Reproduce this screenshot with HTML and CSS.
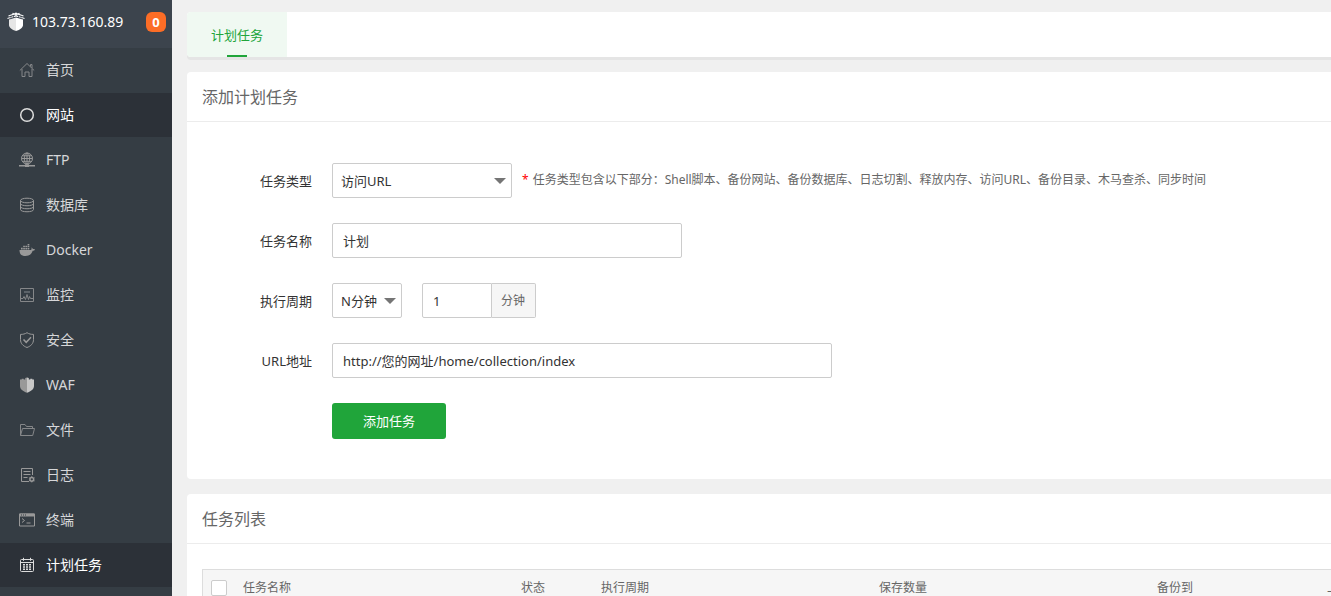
FILE: index.html
```html
<!DOCTYPE html>
<html lang="zh-CN">
<head>
<meta charset="utf-8">
<title>计划任务</title>
<link rel="stylesheet" href="styles.css">
</head>
<body>
<div class="app">
  <aside class="sidebar">
    <div class="server">
      <svg class="server-logo" viewBox="0 0 18 20" width="18" height="20">
        <path fill="#e6e6e6" d="M2 7l7-1.500v13.500c-4-1-7-3.500-7-6z"/>
        <path fill="#fff" d="M9 5.500L16 7v6c0 2.500-3 5-7 6z"/>
        <path fill="none" stroke="#fff" stroke-width="1.200" d="M9 .500v5M.5 6.500l8.500-2.500 8.500 2.500M1.500 4l7.500-2.500L16.500 4M5.500 1.200l2 1M12.500 1.200l-2 1"/>
        <path fill="none" stroke="#3c444d" stroke-width=".7" d="M1 7.500l8-2.500 8 2.500M4 3.800v3M6.500 3v3M11.500 3v3M14 3.800v3"/>
      </svg>
      <span class="server-ip">103.73.160.89</span>
      <span class="badge">0</span>
    </div>
    <nav class="menu">
      <a class="menu-item" href="#"><svg class="icon dim" viewBox="0 0 16 16"><path d="M.800 8.500L8 1.500l7.200 7M3 7v7.500h3V10h4v4.500h3V7M11.500 4.500v-2h1.500V6"/></svg>首页</a>
      <a class="menu-item active" href="#"><svg class="icon thick" viewBox="0 0 16 16"><circle cx="8" cy="8" r="6.300"/></svg>网站</a>
      <a class="menu-item" href="#"><svg class="icon" viewBox="0 0 16 16"><circle cx="8" cy="6.500" r="5.500"/><ellipse cx="8" cy="6.500" rx="2.700" ry="5.500"/><path d="M8 1v11M2.500 6.500h11M3.500 3.800h9M3.500 9.300h9"/><path class="solid" d="M0 13h16v1.500H0zM6 12.300h4v2.700H6z"/></svg>FTP</a>
      <a class="menu-item" href="#"><svg class="icon" viewBox="0 0 16 16"><ellipse cx="8" cy="3.500" rx="6.500" ry="2.300"/><path d="M1.500 3.500v9c0 3 13 3 13 0v-9M1.500 6.500c0 3 13 3 13 0M1.500 9.500c0 3 13 3 13 0"/></svg>数据库</a>
      <a class="menu-item" href="#"><svg class="icon fill" viewBox="0 0 16 16"><path d="M.500 8h11.500c.800-.700.700-1.700.400-2.500.900.300 1.400 1 1.500 1.700.700-.200 1.400-.100 2 .200-.400 1-1.300 1.300-2.200 1.300C12.700 12 10 14 6.500 14 2.800 14 .500 12.500.500 8zM2 5.700h1.700v1.700H2zM4.200 5.700h1.700v1.700H4.200zM6.400 5.700h1.700v1.700H6.400zM8.600 5.700h1.700v1.700H8.600zM4.200 3.700h1.700v1.400H4.200zM6.400 3.700h1.700v1.400H6.400zM8.600 3.700h1.700v1.400H8.600zM8.600 2h1.700v1.200H8.600z"/></svg>Docker</a>
      <a class="menu-item" href="#"><svg class="icon dim" viewBox="0 0 16 16"><path d="M1.500 1.500h13v13h-13zM1.500 11.500H4l1-2 1.500 3 1.500-5 1.500 5 1-3 1 2h3"/><path class="faint" d="M5 4.500h6M5 5.500h6"/></svg>监控</a>
      <a class="menu-item" href="#"><svg class="icon" viewBox="0 0 16 16"><path d="M8 .700c2 1.300 4 1.700 6.500 1.700v5.100c0 4-2.500 6.500-6.500 8-4-1.500-6.500-4-6.500-8V2.400C4 2.400 6 2 8 .700z"/><path class="thick" d="M4.500 7.500l2.700 2.800L12 5.200"/></svg>安全</a>
      <a class="menu-item" href="#"><svg class="icon fill" viewBox="0 0 16 16"><path d="M8 .500v15.300C4 14.500 1 12 1 9V2.500h1.700V1.800h2v.700h1.500V1z"/><path class="light" d="M8 .500v15.300c4-1.300 7-3.800 7-6.800V2.500h-1.700V1.800h-2v.700H9.800V1z"/></svg>WAF</a>
      <a class="menu-item" href="#"><svg class="icon dim" viewBox="0 0 16 16"><path d="M1.500 13.500v-11h4.500l1.500 2h6v2M1.500 13.500l2-7h12l-1.800 7z"/></svg>文件</a>
      <a class="menu-item" href="#"><svg class="icon" viewBox="0 0 16 16"><path d="M13.500 8V1.500h-11v13H10M4.500 4.500h7M4.500 7.500h7M4.500 10.500h4"/><circle class="thick" cx="12.800" cy="12.300" r="1.900"/><path d="M12.800 9.200v1M12.800 14.400v1M10.100 10.700l.8.500M14.700 13.400l.8.500M15.500 10.700l-.8.500M10.900 13.400l-.8.500"/></svg>日志</a>
      <a class="menu-item" href="#"><svg class="icon" viewBox="0 0 16 16"><path d="M.500 2h15v12H.500zM3 6.500l2.500 2L3 10.500M7.500 11h4"/><path class="solid" d="M.500 1.500h15v3H.500z"/><path class="cut" d="M2 3h1M4 3h1M6 3h1"/></svg>终端</a>
      <a class="menu-item active" href="#"><svg class="icon" viewBox="0 0 16 16"><rect x="1.500" y="2.500" width="13" height="12" rx="1"/><path d="M1.500 5.500h13M4.500 .800v3M11.500 .800v3"/><path class="solid" d="M4 7h2v1.500H4zM7 7h2v1.500H7zM10 7h2v1.500h-2zM4 9.300h2v1.400H4zM7 9.300h2v1.400H7zM10 9.300h2v1.400h-2zM4 11.500h2v1.400H4zM7 11.500h2v1.400H7zM10 11.500h2v1.400h-2z"/></svg>计划任务</a>
    </nav>
  </aside>

  <main class="main">
    <div class="tabs"><a class="tab" href="#">计划任务</a></div>

    <section class="card">
      <h2 class="card-title">添加计划任务</h2>
      <form class="form">
        <div class="row">
          <label class="label" for="type">任务类型</label>
          <span class="select type"><select id="type"><option>访问URL</option></select></span>
          <p class="note"><span class="star">*</span>任务类型包含以下部分：Shell脚本、备份网站、备份数据库、日志切割、释放内存、访问URL、备份目录、木马查杀、同步时间</p>
        </div>
        <div class="row">
          <label class="label" for="name">任务名称</label>
          <input class="input name" id="name" type="text" value="计划">
        </div>
        <div class="row">
          <label class="label" for="cycle">执行周期</label>
          <span class="select cycle"><select id="cycle"><option>N分钟</option></select></span>
          <span class="group">
            <input class="input count" type="text" value="1" aria-label="分钟">
            <span class="unit">分钟</span>
          </span>
        </div>
        <div class="row">
          <label class="label" for="url">URL地址</label>
          <input class="input url" id="url" type="text" value="http://您的网址/home/collection/index">
        </div>
        <div class="row">
          <span class="label"></span>
          <button class="submit" type="button">添加任务</button>
        </div>
      </form>
    </section>

    <section class="card">
      <h2 class="card-title">任务列表</h2>
      <div class="list">
        <table class="table">
          <colgroup><col class="c-check"><col class="c-wide"><col class="c-state"><col class="c-wide"><col class="c-wide"><col class="c-last"></colgroup>
          <thead>
            <tr><th><input class="check" type="checkbox" aria-label="全选"></th><th>任务名称</th><th>状态</th><th>执行周期</th><th>保存数量</th><th>备份到</th><th>上次执行时间</th></tr>
          </thead>
        </table>
      </div>
    </section>
  </main>
</div>
</body>
</html>
```
FILE: styles.css
```css
* { box-sizing: border-box; }

body {
  margin: 0;
  height: 100vh;
  overflow: hidden;
  background: #f0f0f0;
  color: #333;
  font: 13px/20px "Noto Sans", "Noto Sans CJK SC", sans-serif;
}

a { text-decoration: none; color: inherit; }

.app { display: flex; height: 100%; }

/* Sidebar */
.sidebar { flex: none; width: 172px; background: #353d44; color: #d6d7d9; }

.server {
  display: flex;
  align-items: center;
  height: 48px;
  padding: 0 6px 4px 7px;
  background: #3c444d;
  color: #fff;
  font-size: 14px;
}
.server-logo { margin-right: 7px; }
.server-ip { flex: 1; }
.badge {
  width: 20px;
  border-radius: 6px;
  background: #fc6d26;
  font-size: 13px;
  font-weight: 700;
  text-align: center;
}

.menu { display: grid; gap: 1px; }
.menu-item {
  display: flex;
  align-items: center;
  gap: 11px;
  height: 44px;
  padding-left: 19px;
  font-size: 14px;
}
.menu-item.active { background: #2c3138; color: #fff; }

.icon { width: 16px; height: 16px; fill: none; stroke: #999; stroke-width: 1; }
.icon.dim { stroke: #858789; }
.icon.thick, .icon .thick { stroke-width: 1.5; }
.icon .solid, .icon.fill { fill: #999; stroke: none; }
.icon .light { fill: #c8c8c8; }
.icon .faint { stroke: #5c6369; }
.icon .cut { stroke: #353d44; }
.active .icon { stroke: #ddd; }
.active .icon .solid { fill: #ddd; }

/* Content */
.main { flex: 1; min-width: 0; padding: 12px 0 0 15px; }

.tabs {
  display: flex;
  height: 45px;
  margin-bottom: 15px;
  border-radius: 4px 0 0 4px;
  background: #fff;
  box-shadow: 0 3px 0 #e5e5e5;
}
.tab {
  display: flex;
  flex-direction: column;
  align-items: center;
  justify-content: space-between;
  width: 100px;
  padding-top: 13px;
  border-radius: 4px 0 0 4px;
  background: #f0f9f2;
  color: #20a53a;
}
.tab::after { content: ""; width: 20px; height: 2px; background: #20a53a; }

.card {
  margin-bottom: 15px;
  border-radius: 4px 0 0 4px;
  background: #fff;
}
.card-title {
  margin: 0;
  padding: 15px 15px 14px;
  border-bottom: 1px solid #ececec;
  color: #666;
  font-size: 16px;
  font-weight: 400;
}

.form { display: grid; gap: 25px; padding: 41px 15px 40px; }
.row { display: flex; align-items: center; }
.label { flex: none; width: 110px; margin-right: 20px; text-align: right; }

.select { position: relative; flex: none; }
.select::after {
  content: "";
  position: absolute;
  top: 15px;
  right: 6px;
  border: 6px solid transparent;
  border-top-color: #757575;
  border-bottom: 0;
  pointer-events: none;
}
.select select, .input {
  width: 100%;
  height: 35px;
  border: 1px solid #ccc;
  border-radius: 2px;
  background: #fff;
  color: #333;
  font: inherit;
}
.select select { display: block; appearance: none; padding: 0 8px; }
.input { padding: 0 10px; }
.type { width: 180px; }
.cycle { width: 70px; margin-right: 20px; }
.row .name { width: 350px; }
.row .url { width: 500px; }

.group { display: flex; }
.group .count { width: 70px; border-radius: 2px 0 0 2px; }
.unit {
  padding: 7px 10px 6px 9px;
  border: 1px solid #ccc;
  border-left: 0;
  border-radius: 0 2px 2px 0;
  background: #f6f6f6;
  color: #666;
  font-size: 12px;
}

.note { margin: 0 0 2px 10px; color: #666; font-size: 12px; white-space: nowrap; }
.star { margin-right: 4px; color: #f00; }

.submit {
  height: 36px;
  padding: 0 31px;
  border: 0;
  border-radius: 3px;
  background: #20a53a;
  color: #fff;
  font: inherit;
}

/* Task list */
.list { padding: 25px 0 15px 15px; overflow: hidden; }
.table {
  width: 1300px;
  table-layout: fixed;
  border-collapse: separate;
  border-spacing: 0;
  border: 1px solid #ddd;
  background: #f6f6f6;
}
.table th {
  height: 35px;
  padding: 0 8px;
  color: #666;
  font-size: 12px;
  font-weight: 400;
  text-align: left;
  white-space: nowrap;
}
.c-check { width: 32px; }
.c-wide { width: 278px; }
.c-state { width: 80px; }
.c-last { width: 170px; }
.check {
  display: block;
  appearance: none;
  width: 16px;
  height: 16px;
  margin: 0;
  border: 1px solid #ccc;
  border-radius: 2px;
  background: #fff;
}
```
